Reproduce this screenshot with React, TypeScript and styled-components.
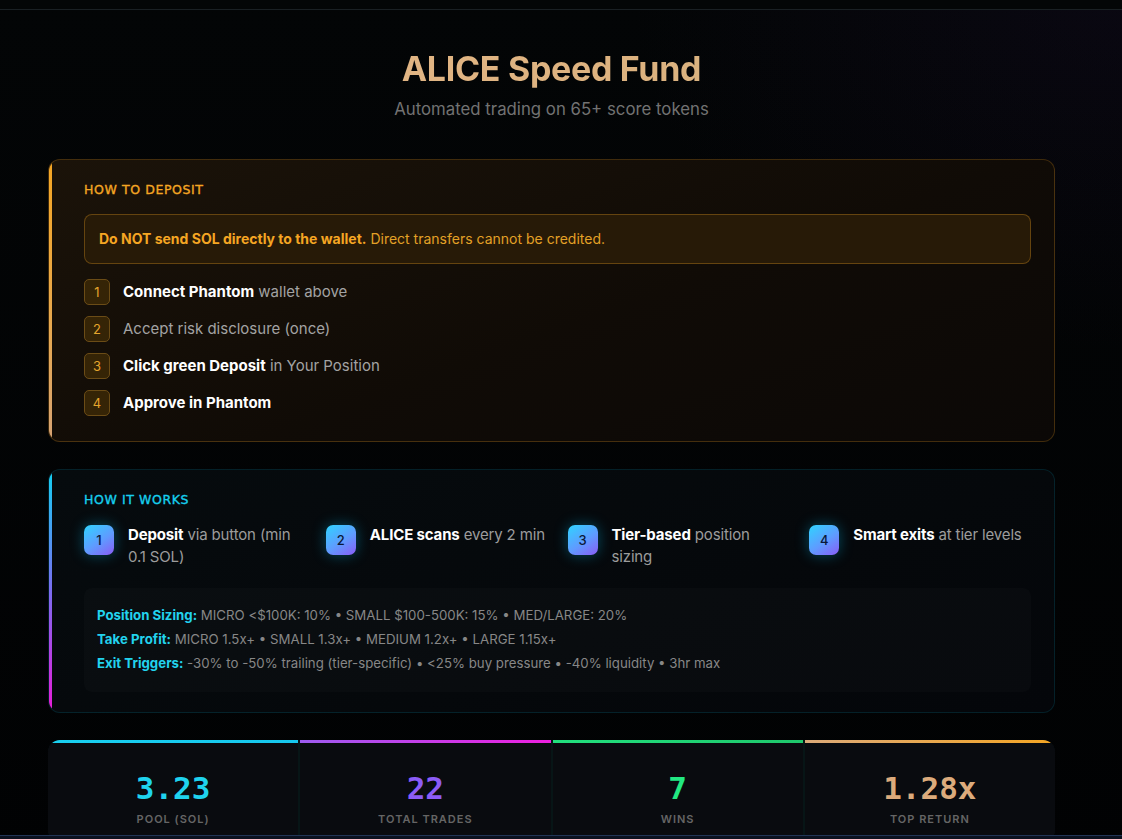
import styled, { createGlobalStyle } from 'styled-components'

const GlobalStyle = createGlobalStyle`
  html, body {
    margin: 0;
    padding: 0;
    background: #020304;
  }
  body {
    font-family: Inter, 'Noto Sans', sans-serif;
    color: #fff;
    min-height: 839px;
    background:
      radial-gradient(ellipse 700px 500px at 100% 0%, rgba(40, 20, 70, 0.18), transparent 70%),
      linear-gradient(180deg, #030506 0%, #010203 100%);
  }
`

const TopBar = styled.div`
  height: 9px;
  background: #040607;
  border-bottom: 1px solid #1a2024;
`

const Page = styled.main`
  width: 1007px;
  margin-left: 48px;
  display: flex;
  flex-direction: column;
  gap: 27px;
  padding-bottom: 40px;
`

const Hero = styled.header`
  padding: 39px 0 11px;
  text-align: center;
`

const Title = styled.h1`
  margin: 0;
  font-size: 34px;
  line-height: 40px;
  font-weight: 700;
  letter-spacing: -0.3px;
  background: linear-gradient(90deg, #e8b98a 0%, #dcb27f 60%, #cbb685 100%);
  -webkit-background-clip: text;
  background-clip: text;
  color: transparent;
`

const Subtitle = styled.p`
  margin: 8px 0 0;
  font-size: 16.8px;
  line-height: 24px;
  color: #727272;
`

const Card = styled.section<{ accent: string; tone: 'amber' | 'cyan' }>`
  position: relative;
  overflow: hidden;
  border-radius: 12px;
  padding: 22px 23px ${p => (p.tone === 'amber' ? 25 : 24)}px 35px;
  border: 1px solid ${p => (p.tone === 'amber' ? 'rgba(245, 166, 35, 0.22)' : 'rgba(0, 200, 240, 0.13)')};
  background: ${p =>
    p.tone === 'amber'
      ? 'linear-gradient(160deg, #1b1309 0%, #100b06 55%, #0b0806 100%)'
      : 'linear-gradient(160deg, #060b0e 0%, #05080b 60%, #04060a 100%)'};

  &::before {
    content: '';
    position: absolute;
    left: 0;
    top: 0;
    bottom: 0;
    width: 3px;
    background: ${p => p.accent};
  }
`

const SectionLabel = styled.h2<{ color: string }>`
  margin: 0 0 16px;
  font-family: 'DejaVu Sans', sans-serif;
  font-size: 12.5px;
  line-height: 16px;
  font-weight: 400;
  letter-spacing: 0.6px;
  -webkit-text-stroke: 0.35px ${p => p.color};
  color: ${p => p.color};
  text-transform: uppercase;
`

const Warning = styled.div`
  padding: 15px 14px;
  border-radius: 8px;
  background: #271a07;
  border: 1px solid rgba(245, 166, 35, 0.3);
  font-size: 14px;
  line-height: 18px;
  color: #e3a126;

  strong {
    color: #f5a623;
    font-weight: 700;
  }
`

const StepList = styled.ol`
  list-style: none;
  margin: 15px 0 0;
  padding: 0;
  display: flex;
  flex-direction: column;
  gap: 11px;
`

const Step = styled.li`
  display: flex;
  align-items: center;
  gap: 13px;
  font-size: 15px;
  line-height: 20px;
  color: #a3a3a3;

  strong {
    color: #fff;
    font-weight: 700;
  }
`

const StepBadge = styled.span`
  width: 26px;
  height: 26px;
  flex: none;
  box-sizing: border-box;
  display: flex;
  align-items: center;
  justify-content: center;
  border-radius: 5px;
  background: #352406;
  border: 1px solid #6b4c16;
  color: #e5a52c;
  font-size: 13px;
`

const FlowGrid = styled.div`
  display: grid;
  grid-template-columns: repeat(4, 1fr);
  gap: 20px;
  margin-top: 2px;
`

const FlowItem = styled.div`
  display: flex;
  align-items: flex-start;
  gap: 14px;
  font-size: 15px;
  line-height: 22px;
  letter-spacing: -0.15px;
  color: #9c9c9c;

  strong {
    color: #fff;
    font-weight: 700;
  }
`

const FlowText = styled.p`
  margin: 0;
  min-width: 0;
`

const GlowBadge = styled.span`
  width: 30px;
  height: 30px;
  flex: none;
  margin-top: 1px;
  display: flex;
  align-items: center;
  justify-content: center;
  border-radius: 7px;
  background: linear-gradient(145deg, #2fd4ff 0%, #5f9bff 55%, #8a5cf6 100%);
  box-shadow: 0 0 14px rgba(0, 200, 255, 0.35);
  color: #0b1838;
  font-size: 13px;
  font-weight: 500;
  letter-spacing: 0;
`

const Details = styled.div`
  margin: 20px 0 -4px;
  padding: 15px 13px 17px;
  border-radius: 8px;
  background: rgba(255, 255, 255, 0.018);
  font-size: 13.25px;
  line-height: 24px;
  color: #878787;

  strong {
    color: #22d3ee;
    font-weight: 700;
  }
`

const StatsGrid = styled.div`
  display: grid;
  grid-template-columns: repeat(4, 1fr);
  gap: 2px;
  border-radius: 12px;
  overflow: hidden;
  background: #071516;
`

const StatCell = styled.div<{ bar: string }>`
  background: #090b0f;
  border-top: 3px solid transparent;
  border-image: ${p => p.bar} 1;
  padding: 26px 0 16px;
  text-align: center;
`

const StatValue = styled.div<{ color: string }>`
  font-family: 'DejaVu Sans Mono', 'Liberation Mono', monospace;
  font-size: 31px;
  line-height: 38px;
  font-weight: 700;
  color: ${p => p.color};
`

const StatLabel = styled.div`
  margin-top: 5px;
  font-size: 11px;
  line-height: 14px;
  letter-spacing: 1px;
  font-weight: 600;
  color: #656565;
  text-transform: uppercase;
`

const BottomEdge = styled.div`
  position: fixed;
  left: 0;
  right: 0;
  bottom: 0;
  height: 3px;
  background: #0b1220;
  border-top: 1px solid #223556;
`

const depositSteps = [
  { bold: 'Connect Phantom', rest: ' wallet above' },
  { bold: '', rest: 'Accept risk disclosure (once)' },
  { bold: 'Click green Deposit', rest: ' in Your Position' },
  { bold: 'Approve in Phantom', rest: '' },
]

const flow = [
  { bold: 'Deposit', rest: ' via button (min 0.1 SOL)' },
  { bold: 'ALICE scans', rest: ' every 2 min' },
  { bold: 'Tier-based', rest: ' position sizing' },
  { bold: 'Smart exits', rest: ' at tier levels' },
]

const stats = [
  { value: '3.23', label: 'Pool (SOL)', color: '#1fd3ee', bar: 'linear-gradient(90deg, #19d0f0, #16c8ee)' },
  { value: '22', label: 'Total Trades', color: '#8b5cf6', bar: 'linear-gradient(90deg, #9d5cf0, #ee1fe0)' },
  { value: '7', label: 'Wins', color: '#22e882', bar: 'linear-gradient(90deg, #22e07e, #1fc86c)' },
  { value: '1.28x', label: 'Top Return', color: '#dcab7c', bar: 'linear-gradient(90deg, #dcaa7a, #f5a623)' },
]

export default function App() {
  return (
    <>
      <GlobalStyle />
      <TopBar />
      <Page>
        <Hero>
          <Title>ALICE Speed Fund</Title>
          <Subtitle>Automated trading on 65+ score tokens</Subtitle>
        </Hero>

        <Card tone="amber" accent="linear-gradient(180deg, #f5a623 0%, #e6a850 60%, #d6a374 100%)">
          <SectionLabel color="#f5a623">How to Deposit</SectionLabel>
          <Warning>
            <strong>Do NOT send SOL directly to the wallet.</strong> Direct transfers cannot be credited.
          </Warning>
          <StepList>
            {depositSteps.map((s, i) => (
              <Step key={i}>
                <StepBadge>{i + 1}</StepBadge>
                <span>
                  {s.bold && <strong>{s.bold}</strong>}
                  {s.rest}
                </span>
              </Step>
            ))}
          </StepList>
        </Card>

        <Card tone="cyan" accent="linear-gradient(180deg, #12d0f2 0%, #7b6cf0 50%, #e81cd8 100%)">
          <SectionLabel color="#16d0ef">How it Works</SectionLabel>
          <FlowGrid>
            {flow.map((f, i) => (
              <FlowItem key={i}>
                <GlowBadge>{i + 1}</GlowBadge>
                <FlowText>
                  <strong>{f.bold}</strong>
                  {f.rest}
                </FlowText>
              </FlowItem>
            ))}
          </FlowGrid>
          <Details>
            <div>
              <strong>Position Sizing:</strong> MICRO &lt;$100K: 10% • SMALL $100-500K: 15% • MED/LARGE: 20%
            </div>
            <div>
              <strong>Take Profit:</strong> MICRO 1.5x+ • SMALL 1.3x+ • MEDIUM 1.2x+ • LARGE 1.15x+
            </div>
            <div>
              <strong>Exit Triggers:</strong> -30% to -50% trailing (tier-specific) • &lt;25% buy pressure • -40% liquidity • 3hr max
            </div>
          </Details>
        </Card>

        <StatsGrid>
          {stats.map(s => (
            <StatCell key={s.label} bar={s.bar}>
              <StatValue color={s.color}>{s.value}</StatValue>
              <StatLabel>{s.label}</StatLabel>
            </StatCell>
          ))}
        </StatsGrid>
      </Page>
      <BottomEdge />
    </>
  )
}
